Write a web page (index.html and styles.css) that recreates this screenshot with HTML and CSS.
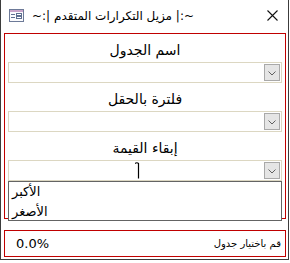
FILE: index.html
```html
<!DOCTYPE html>
<html>
<head>
    <meta charset="UTF-8">
    <title>مزيل التكرارات المتقدم</title>
    <link rel="stylesheet" href="styles.css">
</head>
<body>
    <div class="window">
        <!-- title bar -->
        <div class="titlebar">
            <svg class="form-icon" width="15" height="13" viewBox="0 0 15 13">
                <rect x="0.5" y="0.5" width="14" height="12" fill="#fbfbfd" stroke="#6d7a98"/>
                <rect x="1" y="1" width="13" height="2" fill="#c9a3c8"/>
                <rect x="2" y="5" width="4" height="1" fill="#5f6f90"/>
                <rect x="2" y="8" width="4" height="1" fill="#5f6f90"/>
                <rect x="7.5" y="4.5" width="5" height="2" fill="#fff" stroke="#5f6f90"/>
                <rect x="7.5" y="7.5" width="5" height="2" fill="#fff" stroke="#5f6f90"/>
            </svg>
            <span class="title">~:| مزيل التكرارات المتقدم |:~</span>
            <svg class="close" width="11" height="11" viewBox="0 0 11 11">
                <path d="M0.5 0.5 L10.5 10.5 M10.5 0.5 L0.5 10.5" stroke="#111" stroke-width="1.1"/>
            </svg>
        </div>

        <div class="frame main">
            <label class="field-label">اسم الجدول</label>
            <div class="combo"><span class="drop"><svg width="8" height="5" viewBox="0 0 8 5"><path d="M0.5 0.5 L4 4 L7.5 0.5" fill="none" stroke="#606060"/></svg></span></div>

            <label class="field-label">فلترة بالحقل</label>
            <div class="combo"><span class="drop"><svg width="8" height="5" viewBox="0 0 8 5"><path d="M0.5 0.5 L4 4 L7.5 0.5" fill="none" stroke="#606060"/></svg></span></div>

            <label class="field-label">إبقاء القيمة</label>
            <div class="combo active">
                <span class="drop"><svg width="8" height="5" viewBox="0 0 8 5"><path d="M0.5 0.5 L4 4 L7.5 0.5" fill="none" stroke="#606060"/></svg></span>
                <!-- mouse cursor -->
                <svg class="ibeam" width="6" height="17" viewBox="0 0 6 17">
                    <path d="M0 1.5 Q2 0 3.5 1.5 L3.5 16.5" fill="none" stroke="#000" stroke-width="1.2"/>
                </svg>
            </div>
            <ul class="droplist">
                <li>الأكبر</li>
                <li>الأصغر</li>
            </ul>
        </div>

        <div class="frame status">
            <span class="status-text">قم باختيار جدول</span>
            <span class="percent">0.0%</span>
        </div>
    </div>
</body>
</html>
```

FILE: styles.css
```css
body {
    margin: 0;
    background-color: #FFFFFF;
    font-family: "DejaVu Sans", sans-serif;
}
.window {
    width: 287px;
    height: 259px;
    border: 1px solid #3c3c3c;
    border-top: none;
    background-color: #FFFFFF;
    display: flex;
    flex-direction: column;
}
.titlebar {
    height: 33px;
    display: flex;
    align-items: center;
    padding: 0 10px 0 8px;
}
.form-icon {
    margin-top: -3px;
}
.title {
    font-size: 12px;
    color: #000000;
    margin-left: 8px;
    margin-top: -2px;
    flex: 1;
    direction: rtl;
    text-align: left;
    unicode-bidi: plaintext;
}
.close {
    margin-top: -2px;
}
.frame {
    border: 1px solid #c00000;
    margin-left: 3px;
    margin-right: 2px;
}
.main {
    position: relative;
    height: 184px;
    padding: 0 3px 0 3px;
    direction: rtl;
}
.field-label {
    display: block;
    text-align: center;
    font-size: 14px;
    color: #000000;
    height: 28px;
    line-height: 32px;
}
.combo {
    position: relative;
    height: 19px;
    border: 1px solid #dcd7c2;
    background-color: #FFFFFF;
}
.drop {
    position: absolute;
    right: 1px;
    top: 1px;
    width: 14px;
    height: 15px;
    border: 1px solid #a9a9a9;
    background-color: #e5e5e5;
    display: flex;
    align-items: center;
    justify-content: center;
}
.drop svg {
    margin-top: 1px;
}
.ibeam {
    position: absolute;
    left: 126px;
    top: 1px;
}
.droplist {
    position: absolute;
    left: 3px;
    right: 3px;
    top: 147px;
    height: 38px;
    margin: 0;
    padding: 0 0 0 3px;
    list-style: none;
    border: 1px solid #646464;
    background-color: #FFFFFF;
    direction: ltr;
}
.droplist li {
    font-size: 13px;
    height: 20px;
    line-height: 19px;
    color: #000000;
}
.status {
    margin-top: 11px;
    height: 25px;
    display: flex;
    align-items: center;
    justify-content: space-between;
    flex-direction: row-reverse;
    padding: 0 4px 0 11px;
}
.percent {
    font-size: 13px;
    color: #000000;
}
.status-text {
    font-size: 10px;
    color: #000000;
    direction: rtl;
}
```
